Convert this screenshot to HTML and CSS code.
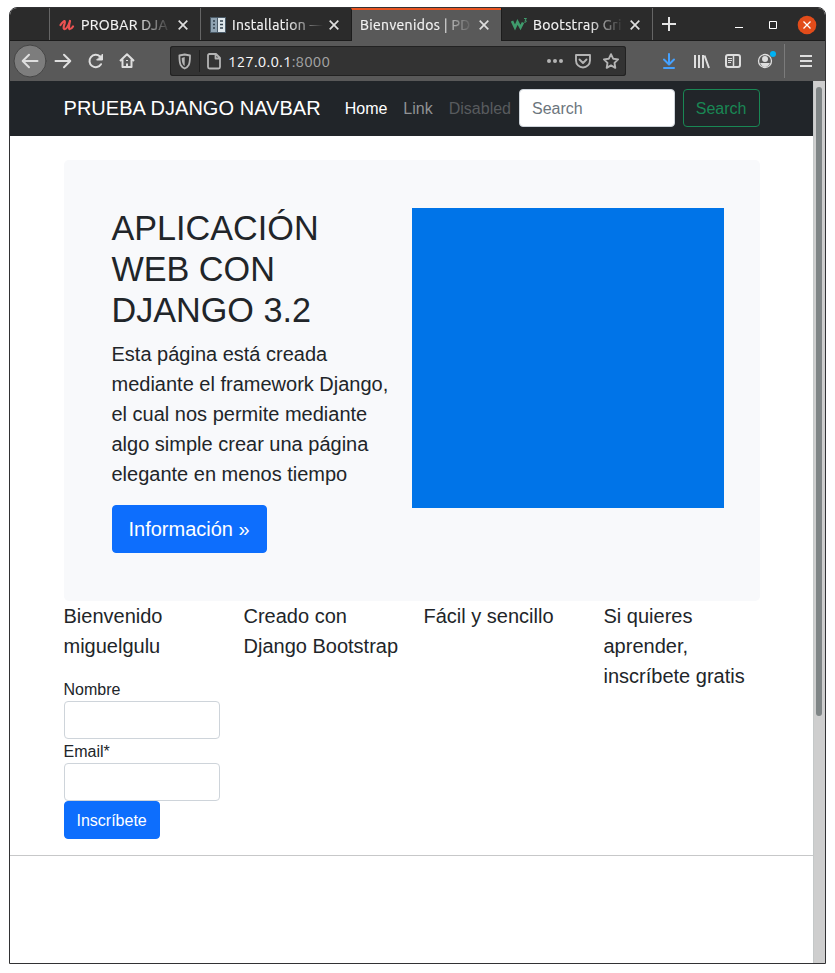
FILE: index.html
```html
<!DOCTYPE html>
<html lang="es">
<head>
<meta charset="utf-8">
<title>Bienvenidos | PD</title>
<link rel="stylesheet" href="styles.css">
</head>
<body>
<div class="window">
  <header class="tabs">
    <div class="tab-lead"></div>
    <div class="tab">
      <svg class="favicon" viewBox="0 0 16 16" fill="none" stroke="#ec5252" stroke-linecap="round" stroke-linejoin="round"><path stroke-width="2.200" d="M1.500 8Q4.500 3.500 5.500 4Q6.500 4.500 5 8.500Q4 12.500 6 12Q8.500 11.500 11 4Q9 12.500 11 12Q12.500 12 14 9.500"/></svg>
      <span class="tab-title">PROBAR DJA</span>
      <svg class="close" viewBox="0 0 10 10"><path d="M.7.7l8.600 8.600M9.300.7L.7 9.300"/></svg>
    </div>
    <div class="tab">
      <svg class="favicon" viewBox="0 0 16 16"><path fill="#4b5b68" d="M0 0h16v16H0z"/><path fill="#8fa3b2" d="M1 1h6v14H1z"/><path fill="#dfe8ed" d="M8 1h7v14H8z"/><path stroke="#34434f" stroke-width="1.500" d="M3 4h2M3 7.500h2M3 11h2M10 4h3M10 7.500h3M10 11h3"/></svg>
      <span class="tab-title">Installation —</span>
      <svg class="close" viewBox="0 0 10 10"><path d="M.7.7l8.600 8.600M9.300.7L.7 9.300"/></svg>
    </div>
    <div class="tab active">
      <span class="tab-title">Bienvenidos | PD</span>
      <svg class="close" viewBox="0 0 10 10"><path d="M.7.7l8.600 8.600M9.300.7L.7 9.300"/></svg>
    </div>
    <div class="tab">
      <svg class="favicon" viewBox="0 0 16 16" fill="none" stroke="#3f9b6c"><path stroke-width="2.600" stroke-linejoin="miter" d="M1 4l3 6.500L6.500 5l3 5.500L12 5.500"/><path stroke-width="1" d="M13 1.500h2.500l-1.500 1.800q2 .2 1 1.700l-2 .2"/></svg>
      <span class="tab-title">Bootstrap Gri</span>
      <svg class="close" viewBox="0 0 10 10"><path d="M.7.7l8.600 8.600M9.300.7L.7 9.300"/></svg>
    </div>
    <svg class="controls" viewBox="0 0 172 33" fill="none">
      <path stroke="#e4e4e4" stroke-width="2" d="M9 16h14M16 9v14"/>
      <path stroke="#fff" d="M82 19.500h8"/>
      <path stroke="#fff" d="M116.500 13.500h7v7h-7z"/>
      <circle cx="154" cy="17" r="9.300" fill="#e24c1a"/>
      <path stroke="#fff" stroke-width="1.300" d="M150.500 13.500l7 7M157.500 13.500l-7 7"/>
    </svg>
  </header>
  <div class="toolbar">
    <svg class="nav-icons" viewBox="0 0 160 40" fill="none" stroke="#dedede" stroke-width="2" stroke-linecap="round" stroke-linejoin="round">
      <circle cx="20" cy="20" r="16" fill="#7d7d7d" stroke="#454545" stroke-width="1"/>
      <path d="M27.500 20H13M19 13.800L12.700 20l6.300 6.200"/>
      <path d="M45.500 20H60M54 13.800l6.300 6.200-6.300 6.200"/>
      <path d="M91 23.200A6.200 6.200 0 1 1 90 15.500"/><path fill="#dedede" stroke-width="1" d="M92.500 13.500v5.500H87z"/>
      <path stroke-linecap="butt" d="M110 20l7-6.700 7 6.700M112.500 18.500V26h9v-7.500M117 26v-3.500M117 19v1"/>
    </svg>
    <div class="address">
      <svg class="shield" viewBox="0 0 54 30" fill="none" stroke="#b4b4b4" stroke-width="1.800" stroke-linejoin="round">
        <path d="M14.700 8.500l5.300 1q0 7-1.300 9.500-1.400 2.500-4 3.500-2.600-1-4-3.500-1.300-2.500-1.300-9.500z"/><path fill="#b4b4b4" stroke="none" d="M14.700 11v9q-3-1.500-3-8z"/>
        <path stroke="#202020" stroke-width="1" d="M29.500 4v22"/>
        <path d="M40 8h6l4 4v9q0 1.500-1.500 1.500H39.500Q38 22.500 38 21V9.500Q38 8 39.500 8zM45.500 8v4.500H50"/>
      </svg>
      <span class="url">127.0.0.1<span class="port">:8000</span></span>
      <svg class="actions" viewBox="0 0 86 30" fill="none" stroke="#b4b4b4" stroke-width="1.900" stroke-linejoin="round">
        <g fill="#b4b4b4" stroke="none"><circle cx="9" cy="15" r="2"/><circle cx="15" cy="15" r="2"/><circle cx="21" cy="15" r="2"/></g>
        <path d="M36 9h14v5.500a7 7 0 0 1-14 0zM39.500 13.500l3.500 3.500 3.500-3.500" stroke-linecap="round"/>
        <path d="M71 8.200l2.100 4.500 5 .7-3.600 3.500.8 4.900-4.300-2.400-4.300 2.400.8-4.900-3.600-3.500 5-.7z"/>
      </svg>
    </div>
    <svg class="tool-icons" viewBox="0 0 175 40" fill="none" stroke="#dedede" stroke-width="2">
      <path stroke="#45a1ff" stroke-linecap="round" stroke-linejoin="round" d="M19 13v10M14 18.500l5 5 5-5M14 27h10"/>
      <path d="M45 14v13M49 14v13M53 14v13M54.500 14.500l4.500 12.500"/>
      <rect x="76" y="14" width="14" height="12" rx="2"/><path d="M83.500 14v12" stroke-width="1.500"/><path stroke-width="1" d="M78 17.500h4M78 19.500h4M78 21.500h3"/>
      <circle cx="115" cy="20" r="6.500" stroke-width="1.300"/><circle cx="115" cy="18" r="3" fill="#dedede" stroke="none"/><path fill="#dedede" stroke="none" d="M110 22h10q-2 4-5 4t-5-4z"/>
      <circle cx="123" cy="13" r="3" fill="#00b3f4" stroke="none"/>
      <path stroke="#7b7b7b" stroke-width="1" d="M134.500 3v34"/>
      <path d="M150 15h12M150 20h12M150 25h12"/>
    </svg>
  </div>
  <div class="viewport">
    <main class="page">
      <nav class="navbar">
        <div class="container navbar-row">
          <a class="brand">PRUEBA DJANGO NAVBAR</a>
          <a class="link current">Home</a>
          <a class="link">Link</a>
          <a class="link disabled">Disabled</a>
          <input class="field search" type="text" placeholder="Search">
          <button class="btn outline" type="button">Search</button>
        </div>
      </nav>
      <div class="container">
        <section class="hero">
          <div class="hero-text">
            <h1>APLICACIÓN WEB CON DJANGO 3.2</h1>
            <p class="lead">Esta página está creada mediante el framework Django, el cual nos permite mediante algo simple crear una página elegante en menos tiempo</p>
            <a class="btn primary large">Información »</a>
          </div>
          <div class="hero-image"></div>
        </section>
        <section class="columns">
          <div class="column">
            <p class="lead">Bienvenido miguelgulu</p>
            <form>
              <label for="nombre">Nombre</label>
              <input class="field" id="nombre" type="text">
              <label for="email">Email*</label>
              <input class="field" id="email" type="text">
              <button class="btn primary" type="button">Inscríbete</button>
            </form>
          </div>
          <div class="column"><p class="lead">Creado con Django Bootstrap</p></div>
          <div class="column"><p class="lead">Fácil y sencillo</p></div>
          <div class="column"><p class="lead">Si quieres aprender, inscríbete gratis</p></div>
        </section>
      </div>
      <hr>
    </main>
    <div class="scrollbar"><div class="thumb"></div></div>
  </div>
</div>
</body>
</html>
```
FILE: styles.css
```css
* { box-sizing: border-box; }
body {
  margin: 0;
  padding: 7px 9px 9px;
  height: 973px;
  overflow: hidden;
  background: #fff;
  color: #212529;
  font: 16px/1.5 "Liberation Sans", Arial, sans-serif;
}
.window {
  display: flex;
  flex-direction: column;
  width: 817px;
  height: 957px;
  border: 1px solid #323234;
  border-radius: 8px 8px 0 0;
  overflow: hidden;
}
svg { display: block; flex: none; }

.tabs {
  display: flex;
  flex: none;
  height: 33px;
  background: #2b2b2b;
  border-bottom: 1px solid #1c1c1c;
  font-family: Ubuntu, "Noto Sans", sans-serif;
  font-size: 14px;
  letter-spacing: .35px;
  color: #f4f4f4;
}
.tab-lead { width: 39px; flex: none; }
.tab {
  display: flex;
  align-items: center;
  flex: none;
  width: 151px;
  padding: 1px 12px 0 9px;
  border-left: 1px solid #656565;
}
.tab.active {
  width: 150px;
  height: 33px;
  padding: 0 12px 2px 8px;
  background: #595959;
  border-top: 2px solid #e95420;
  border-left-color: #1c1c1c;
}
.tab.active + .tab { border-left-color: #1c1c1c; }
.tab:last-of-type { width: 152px; border-right: 1px solid #656565; }
.favicon { width: 16px; height: 16px; margin-right: 6px; }
.tab-title {
  flex: 1;
  min-width: 0;
  white-space: nowrap;
  line-height: 22px;
  -webkit-text-stroke: .2px currentColor;
  -webkit-mask-image: linear-gradient(to right, #000 calc(100% - 36px), transparent);
  mask-image: linear-gradient(to right, #000 calc(100% - 36px), transparent);
}
.close { width: 10px; height: 10px; margin-left: 6px; fill: none; stroke: #dedede; stroke-width: 1.7; }
.controls { width: 172px; height: 33px; }

.toolbar {
  display: flex;
  align-items: center;
  flex: none;
  height: 40px;
  background: #595959;
}
.nav-icons { width: 160px; height: 40px; }
.address {
  display: flex;
  align-items: center;
  width: 456px;
  height: 30px;
  background: #333;
  border-radius: 3px;
  box-shadow: inset 0 0 0 1px #222;
  font: 15px/20px Ubuntu, "Noto Sans", sans-serif;
  color: #f9f9fa;
}
.shield { width: 54px; height: 30px; }
.url { flex: 1; padding: 1px 0 0 4px; letter-spacing: .2px; }
.port { color: #a5a5a5; }
.actions { width: 86px; height: 30px; }
.tool-icons { width: 175px; height: 40px; margin-left: 24px; }

.viewport { display: flex; flex: 1; min-height: 0; }
.page { width: 803px; flex: none; background: #fff; }
.scrollbar {
  width: 12px;
  flex: none;
  padding: 6px 2px;
  background: #cecece;
  border-left: 1px solid #c4c8c8;
}
.thumb { width: 6px; height: 629px; border-radius: 3px; background: #7f8586; }

.container { width: 720px; margin: 0 auto; padding: 0 12px; }
.navbar { padding: 8px 0 9px; background: #212529; }
.navbar-row { display: flex; align-items: center; height: 38px; }
.brand { margin-right: 16px; color: #fff; font-size: 20px; line-height: 30px; letter-spacing: .04px; white-space: nowrap; }
.link { padding: 2px 8px 0; color: #909294; }
.link.current { color: #fff; }
.link.disabled { color: #585b5e; }

.field {
  display: block;
  width: 156px;
  height: 38px;
  padding: 7px 12px 5px;
  border: 1px solid #ced4da;
  border-radius: 4px;
  background: #fff;
  color: #212529;
  font: inherit;
}
.field::placeholder { color: #6c757d; opacity: 1; }
.search { flex: 1; min-width: 0; margin-right: 8px; }
.btn {
  display: inline-block;
  padding: 7px 12px 5px;
  border: 1px solid transparent;
  border-radius: 4px;
  background: transparent;
  font: inherit;
}
.primary { background: #0d6efd; border-color: #0d6efd; color: #fff; }
.outline { border-color: #198754; color: #198754; }
.large { padding: 8px 16px; font-size: 20px; vertical-align: top; }

.hero {
  display: flex;
  gap: 12px;
  height: 441px;
  margin-top: 24px;
  padding: 48px;
  background: #f8f9fb;
  border-radius: 4.8px;
}
.hero-text { width: 288px; flex: none; }
h1 { margin: 0 0 8px; font-size: 34.2px; font-weight: 400; line-height: 41px; }
.lead { margin: 0 0 16px; font-size: 20px; line-height: 30px; }
.hero-image { width: 312px; height: 300px; flex: none; background: #0074e8; }
.columns { display: grid; grid-template-columns: repeat(4, 156px); column-gap: 24px; }
label { display: block; height: 24px; padding-top: 1px; line-height: 24px; }
form .btn { display: block; }
hr { height: 1px; margin: 16px 0; border: 0; background: #c7c8c9; }
```
